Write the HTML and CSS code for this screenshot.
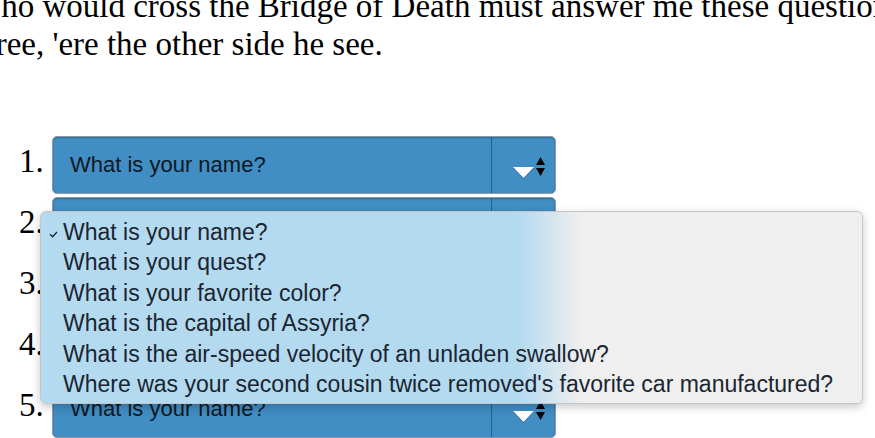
FILE: index.html
```html
<!DOCTYPE html>
<html>
<head>
<meta charset="utf-8">
<title>Bridge of Death</title>
<link rel="stylesheet" href="styles.css">
</head>
<body>
<p class="intro">Who would cross the Bridge of Death must answer me these questions<br>three, 'ere the other side he see.</p>
<ol class="questions">
  <li><div class="select"><span class="value">What is your name?</span><span class="arrow"><svg width="63" height="56" viewBox="0 0 63 56"><path d="M21 31 L42 31 L31.5 42 Z" fill="rgba(0,0,0,0.25)"/><path d="M21 30 L42 30 L31.5 41 Z" fill="#fff"/><path d="M48.5 20 L53 28 L44 28 Z" fill="#000"/><path d="M44 31 L53 31 L48.5 39 Z" fill="#000"/></svg></span></div></li>
  <li><div class="select"><span class="value">What is your name?</span><span class="arrow"><svg width="63" height="56" viewBox="0 0 63 56"><path d="M21 31 L42 31 L31.5 42 Z" fill="rgba(0,0,0,0.25)"/><path d="M21 30 L42 30 L31.5 41 Z" fill="#fff"/><path d="M48.5 20 L53 28 L44 28 Z" fill="#000"/><path d="M44 31 L53 31 L48.5 39 Z" fill="#000"/></svg></span></div></li>
  <li><div class="select"><span class="value">What is your name?</span><span class="arrow"><svg width="63" height="56" viewBox="0 0 63 56"><path d="M21 31 L42 31 L31.5 42 Z" fill="rgba(0,0,0,0.25)"/><path d="M21 30 L42 30 L31.5 41 Z" fill="#fff"/><path d="M48.5 20 L53 28 L44 28 Z" fill="#000"/><path d="M44 31 L53 31 L48.5 39 Z" fill="#000"/></svg></span></div></li>
  <li><div class="select"><span class="value">What is your name?</span><span class="arrow"><svg width="63" height="56" viewBox="0 0 63 56"><path d="M21 31 L42 31 L31.5 42 Z" fill="rgba(0,0,0,0.25)"/><path d="M21 30 L42 30 L31.5 41 Z" fill="#fff"/><path d="M48.5 20 L53 28 L44 28 Z" fill="#000"/><path d="M44 31 L53 31 L48.5 39 Z" fill="#000"/></svg></span></div></li>
  <li><div class="select"><span class="value">What is your name?</span><span class="arrow"><svg width="63" height="56" viewBox="0 0 63 56"><path d="M21 31 L42 31 L31.5 42 Z" fill="rgba(0,0,0,0.25)"/><path d="M21 30 L42 30 L31.5 41 Z" fill="#fff"/><path d="M48.5 20 L53 28 L44 28 Z" fill="#000"/><path d="M44 31 L53 31 L48.5 39 Z" fill="#000"/></svg></span></div></li>
</ol>
<div class="menu">
  <div class="opt"><svg class="check" width="9" height="7" viewBox="0 0 9 7"><path d="M1 3.2 L3.6 5.8 L8 1" fill="none" stroke="#1a2530" stroke-width="1.3"/></svg>What is your name?</div>
  <div class="opt">What is your quest?</div>
  <div class="opt">What is your favorite color?</div>
  <div class="opt">What is the capital of Assyria?</div>
  <div class="opt">What is the air-speed velocity of an unladen swallow?</div>
  <div class="opt">Where was your second cousin twice removed's favorite car manufactured?</div>
</div>
</body>
</html>
```

FILE: styles.css
```css
html, body {
  margin: 0;
  padding: 0;
  overflow: hidden;
  background: #fff;
}

body {
  width: 875px;
  height: 438px;
  position: relative;
  font-family: "Liberation Serif", "Times New Roman", serif;
  font-size: 33px;
  line-height: 38px;
  color: #000;
}

.intro {
  margin: -13px 0 0 -30px;
  white-space: nowrap;
}

.questions {
  margin: 73px 0 0;
  padding-left: 52px;
}

.questions li {
  margin-bottom: 3px;
}

.select {
  display: inline-flex;
  vertical-align: baseline;
  box-sizing: border-box;
  width: 504px;
  height: 58px;
  border: 1px solid #8d99a3;
  border-radius: 5px;
  background: #408ec4;
  box-shadow: inset 0 1px 2px rgba(0, 0, 0, 0.25);
  font-family: "Liberation Sans", Arial, sans-serif;
  font-size: 22px;
  color: #0f1822;
}

.value {
  flex: 1;
  align-self: center;
  padding-left: 17px;
  line-height: 26px;
}

.arrow {
  width: 63px;
  border-left: 1px solid #245f8b;
  display: flex;
}

.menu {
  position: absolute;
  left: 40px;
  top: 211px;
  width: 823px;
  height: 193px;
  box-sizing: border-box;
  padding: 5px 0 0 22px;
  border: 1px solid #c6c6c6;
  border-radius: 6px;
  background: linear-gradient(to right, #b4daf0 0%, #b4daf0 58%, #efefef 66%, #efefef 100%);
  box-shadow: 0 3px 10px rgba(0, 0, 0, 0.22);
  font-family: "Liberation Sans", Arial, sans-serif;
  font-size: 23px;
  line-height: 30.4px;
  color: #1a2530;
}

.opt {
  position: relative;
  white-space: nowrap;
}

.check {
  position: absolute;
  left: -14px;
  top: 14px;
}
```
